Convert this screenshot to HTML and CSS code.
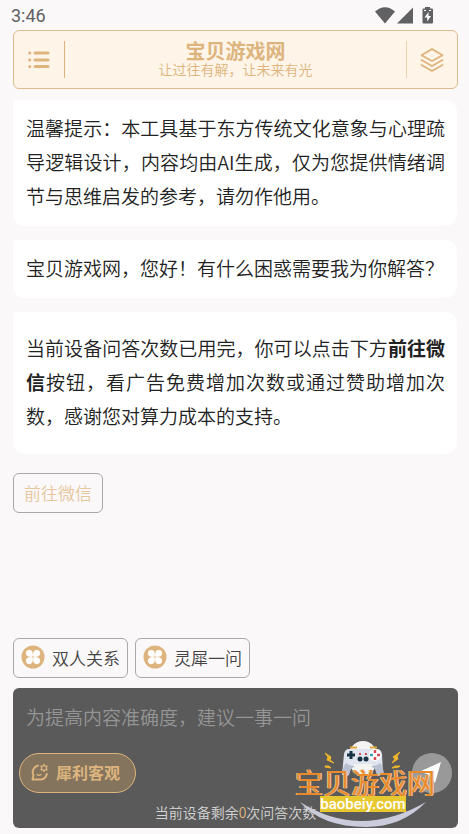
FILE: index.html
```html
<!DOCTYPE html>
<html lang="zh-CN">
<head>
    <meta charset="UTF-8">
    <meta name="viewport" content="width=device-width, initial-scale=1">
    <title>宝贝游戏网</title>
    <link rel="stylesheet" href="styles.css">
</head>
<body>

    <div class="status">
        <span>3:46</span>
        <svg width="60" height="20" viewBox="0 0 60 20" fill="#616062">
            <path d="M0 6.500 Q10 -2 20 6.500 L10 18.500Z"/>
            <path d="M22 18.500 L38 2.500 V18.500Z"/>
            <path d="M50 2h5v1.500h2q1 0 1 1v13q0 1-1 1h-8.500q-1 0-1-1V4.500q0-1 1-1h1.500z"/>
            <path d="M53.500 7 L49.500 12.500 H52.200 V16.500 L56 11 H53.500Z" fill="#fff"/>
            <path d="M49 5.500h2M54 5.500h2" stroke="#fff"/>
        </svg>
    </div>

    <header class="header">
        <button class="icon-btn" aria-label="菜单">
            <svg width="22" height="18" viewBox="0 0 22 18" fill="none" stroke="#ddb47d" stroke-width="3" stroke-linecap="round">
                <path d="M1.700 2h.1M1.700 9h.1M1.700 15.500h.1M7 2h13M7 9h13M7 15.500h13"/>
            </svg>
        </button>
        <div class="header-title">
            <h1>宝贝游戏网</h1>
            <p>让过往有解，让未来有光</p>
        </div>
        <button class="icon-btn" aria-label="图层">
            <svg width="24" height="24" viewBox="0 0 24 24" fill="none" stroke="#ddb47d" stroke-width="1.800" stroke-linejoin="round" stroke-linecap="round">
                <path d="M12 1 L22.500 7.200 L12 13 L1.500 7.200Z"/>
                <path d="M1.500 12 L12 18 L22.500 12"/>
                <path d="M1.500 17 L12 23 L22.500 17"/>
            </svg>
        </button>
    </header>

    <main class="chat">
        <p class="message">温馨提示：本工具基于东方传统文化意象与心理疏导逻辑设计，内容均由AI生成，仅为您提供情绪调节与思维启发的参考，请勿作他用。</p>
        <p class="message">宝贝游戏网，您好！有什么困惑需要我为你解答？</p>
        <p class="message message-large">当前设备问答次数已用完，你可以点击下方<b>前往微信</b>按钮，看广告免费增加次数或通过赞助增加次数，感谢您对算力成本的支持。</p>
        <button class="btn btn-wechat">前往微信</button>
    </main>

    <div class="topics">
        <button class="btn">
            <svg width="24" height="24" viewBox="0 0 24 24">
                <circle cx="12" cy="12" r="11.500" fill="#ddb47d"/>
                <path d="M11.300 11.300H8.500A3 3 0 1 1 11.300 8.500ZM12.700 11.300V8.500A3 3 0 1 1 15.500 11.300ZM11.300 12.700V15.500A3 3 0 1 1 8.500 12.700ZM12.700 12.700H15.500A3 3 0 1 1 12.700 15.500Z" fill="#fff" stroke="#fff"/>
            </svg>
            双人关系
        </button>
        <button class="btn">
            <svg width="24" height="24" viewBox="0 0 24 24">
                <circle cx="12" cy="12" r="11.500" fill="#ddb47d"/>
                <path d="M11.300 11.300H8.500A3 3 0 1 1 11.300 8.500ZM12.700 11.300V8.500A3 3 0 1 1 15.500 11.300ZM11.300 12.700V15.500A3 3 0 1 1 8.500 12.700ZM12.700 12.700H15.500A3 3 0 1 1 12.700 15.500Z" fill="#fff" stroke="#fff"/>
            </svg>
            灵犀一问
        </button>
    </div>

    <form class="composer">
        <textarea class="question" rows="1" aria-label="问题" placeholder="为提高内容准确度，建议一事一问"></textarea>
        <div class="actions">
            <button type="button" class="mode">
                <svg width="18" height="18" viewBox="0 0 18 18" fill="none" stroke="#ddb47d" stroke-width="2" stroke-linejoin="round" stroke-linecap="round">
                    <path d="M7 2.500A7 7 0 0 0 2.500 12.500L1.500 16.500H9A7 7 0 0 0 15.800 11"/>
                    <path d="M13 1.500L14 3.200L16 3.200L15.200 5L16 6.800L14 6.800L13 8.500L12 6.800L10 6.800L10.800 5L10 3.200L12 3.200Z" stroke-width="1.300"/>
                    <path d="M6 11.500Q8 13 10 11.500" stroke-width="1.300"/>
                </svg>
                犀利客观
            </button>
            <button type="button" class="send" aria-label="发送">
                <svg width="24" height="24" viewBox="0 0 24 24" fill="#fff">
                    <path d="M21 1L0 10.500L8 13.500L15 22Z"/>
                </svg>
            </button>
        </div>
        <p class="quota">当前设备剩余<span>0</span>次问答次数</p>

        <div class="watermark">
            <svg class="watermark-art" width="144" height="90" viewBox="0 0 144 90">
                <path d="M6 64Q66 102 132 64Q108 89 72 89Q28 89 6 64Z" fill="#caccdc"/>
                <ellipse cx="69" cy="20" rx="15" ry="17" fill="#f3f3f1"/>
                <path d="M55 11H83Q87 11 88 16L89 37H83Q81 27 77 26H61Q57 27 55 37H48L50 16Q51 11 55 11Z" fill="#e1e5ef"/>
                <path d="M48 36Q49 28 52 25Q55 28 61 28L57 31Q55 36 54 38ZM90 36Q89 28 86 25Q83 28 77 28L81 31Q83 36 84 38Z" fill="#b8bfd0"/>
                <path d="M56 9.500h7M76 9.500h7" stroke="#e2aa3c" stroke-width="2"/>
                <path d="M57 13v8M53 17h8" stroke="#183444" stroke-width="3"/>
                <circle cx="81" cy="17" r="6" fill="#fff"/>
                <path d="M81 12v3M81 19v3" stroke="#d84b52" stroke-width="2.500"/>
                <path d="M76 17h3" stroke="#36a4bc" stroke-width="2.500"/>
                <path d="M83 17h3" stroke="#d84b52" stroke-width="2.500"/>
                <circle cx="66" cy="21" r="2.500" fill="#183444"/>
                <circle cx="72" cy="21" r="2.500" fill="#183444"/>
                <path d="M65 16h2M71 16h2" stroke="#c85357" stroke-width="2"/>
                <path d="M31 15L37 19L36 22L40 25L33 22L34 19ZM31 28L35 28L37 30L31 29ZM106 14L99 19L101 21L98 25L104 21L103 18ZM106 28L101 28L98 30L105 29Z" fill="#edb52c" stroke="#edb52c"/>
            </svg>
            <div class="watermark-name">宝贝游戏网</div>
            <div class="watermark-site">baobeiy.com</div>
        </div>
    </form>

</body>
</html>
```
FILE: styles.css
```css
* { box-sizing: border-box; }
body {
    display: flex;
    flex-direction: column;
    min-height: 100vh;
    margin: 0;
    padding: 0 11px 6px 13px;
    background: #fbf8f9;
    color: #222;
    font-family: "Noto Sans CJK SC", sans-serif;
}
h1, p { margin: 0; }
button {
    margin: 0;
    padding: 0;
    border: 0;
    background: none;
    color: inherit;
    font-family: inherit;
}
svg { display: block; }

/* status bar */
.status {
    display: flex;
    align-items: center;
    justify-content: space-between;
    height: 30px;
    padding: 2px 23px 0 0;
    color: #616062;
    font: 400 18px/28px Roboto, sans-serif;
}
.status span { margin-left: -2px; }
.status svg { margin-bottom: 3px; }

/* header */
.header {
    display: flex;
    align-items: center;
    height: 59px;
    border: 1px solid #ddbb8c;
    border-radius: 6px;
    background: #fef4e8;
    color: #ddb47d;
}
.icon-btn {
    display: flex;
    align-items: center;
    justify-content: center;
    width: 51px;
    height: 37px;
}
.icon-btn:first-child { border-right: 1px solid #ddb47d; }
.icon-btn:last-child { border-left: 1px solid #ecd3b0; }
.header-title {
    flex: 1;
    padding-bottom: 2px;
    text-align: center;
}
.header-title h1 {
    font-size: 20px;
    line-height: 20px;
}
.header-title p {
    font-size: 14px;
    font-weight: 350;
    line-height: 16px;
}

/* messages */
.chat {
    flex: 1;
    padding-top: 11px;
}
.message {
    margin: 0 1px 14px 0;
    padding: 11px 12px 13px 13px;
    border-radius: 2px 12px 12px 12px;
    background: #fff;
    font-size: 19px;
    font-weight: 350;
    line-height: 34px;
    text-align: justify;
}
.message b { font-weight: 700; }
.message-large {
    padding-top: 19px;
    padding-bottom: 21px;
}
.btn {
    display: flex;
    align-items: center;
    gap: 7px;
    height: 40px;
    padding: 0 7px 2px;
    border: 1px solid #aaa8aa;
    border-radius: 6px;
    color: #444;
    font-size: 17px;
    font-weight: 350;
}
.btn-wechat {
    margin-top: 19px;
    padding: 0 10px 2px;
    color: #e6c79d;
}
.topics {
    display: flex;
    gap: 7px;
    margin-bottom: 10px;
}

/* composer */
.composer {
    position: relative;
    padding: 6px;
    border-radius: 6px;
    background: #5a5a5a;
}
.question {
    display: block;
    width: 100%;
    height: 59px;
    padding: 7px;
    border: 0;
    outline: 0;
    background: none;
    color: #fff;
    font-family: inherit;
    font-size: 19px;
    font-weight: 350;
    line-height: 32px;
    resize: none;
}
.question::placeholder { color: #959595; }
.actions {
    display: flex;
    justify-content: space-between;
}
.mode {
    display: flex;
    align-items: center;
    gap: 7px;
    height: 40px;
    padding: 0 15px 2px 11px;
    border: 1px solid #ddb47d;
    border-radius: 20px;
    background: #84745e;
    color: #ddb47d;
    font-size: 16px;
    font-weight: bold;
}
.send {
    display: flex;
    align-items: center;
    justify-content: center;
    width: 40px;
    height: 40px;
    border-radius: 50%;
    background: #999;
}
.quota {
    padding-top: 9px;
    color: #d4d4d4;
    font-size: 14px;
    font-weight: 350;
    line-height: 20px;
    text-align: center;
}
.quota span { color: #ddb47d; }

/* watermark over the composer */
.watermark {
    position: absolute;
    right: 20px;
    bottom: 0;
    width: 144px;
    height: 90px;
    pointer-events: none;
}
.watermark-art {
    position: absolute;
    top: 0;
    left: 0;
}
.watermark-name {
    position: absolute;
    top: 30px;
    left: 1px;
    color: #e88a2c;
    font-size: 28px;
    font-weight: 400;
    line-height: 28px;
    white-space: nowrap;
    text-shadow: 1px 0 #ecc498, -1px 0 #ecc498;
}
.watermark-site {
    position: absolute;
    top: 58px;
    left: 26px;
    width: 86px;
    background: #e8c831;
    color: #fff;
    font-family: Roboto, sans-serif;
    font-size: 15px;
    font-weight: 500;
    line-height: 16px;
    text-align: center;
}
```
